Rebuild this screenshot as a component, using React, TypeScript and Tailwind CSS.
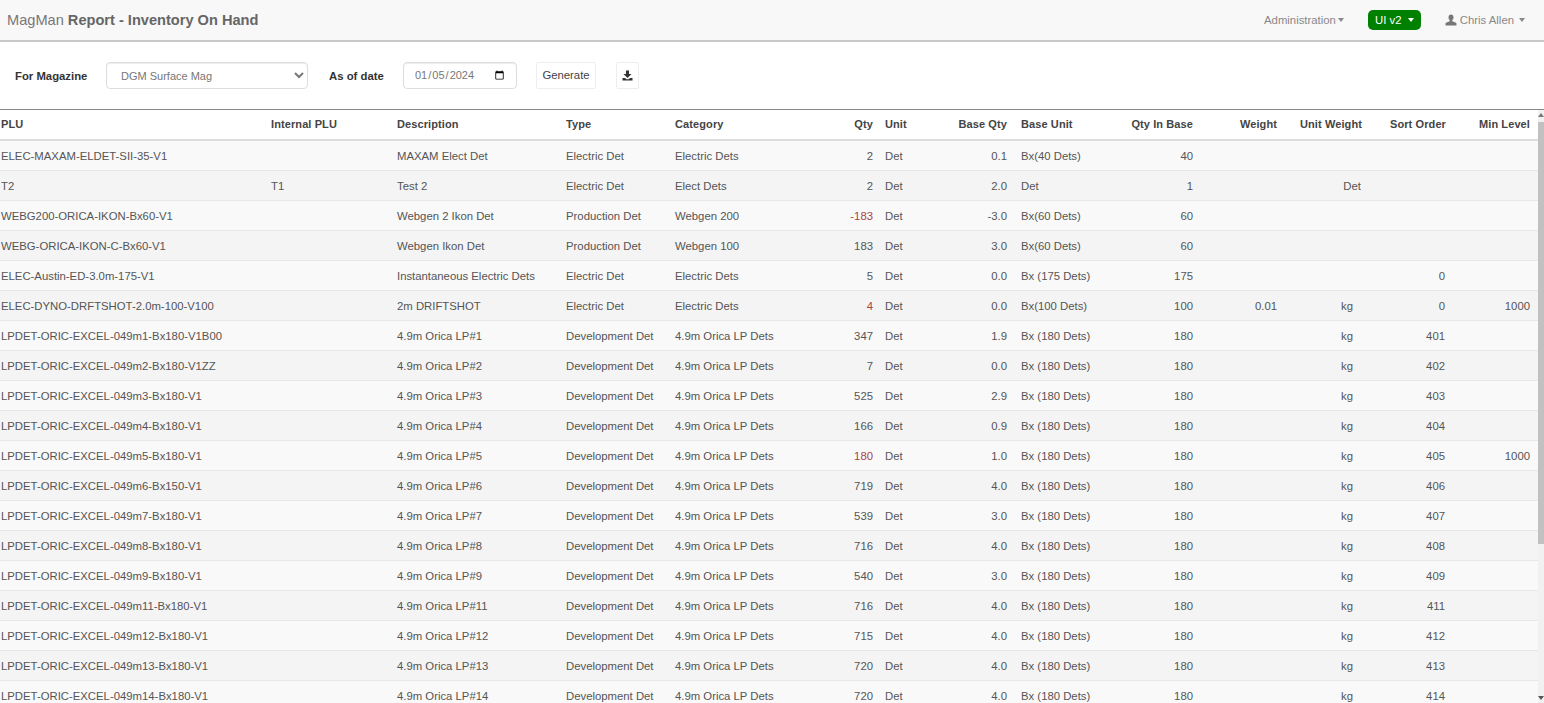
type Row = {
  plu: string;
  internal?: string;
  desc: string;
  type: string;
  cat: string;
  qty: string;
  red?: boolean;
  baseQty: string;
  baseUnit: string;
  inBase: string;
  weight?: string;
  unitWeight?: string;
  sort?: string;
  min?: string;
};

const lp = (plu: string, n: number, qty: string, baseQty: string, extra: Partial<Row> = {}): Row => ({
  plu,
  desc: `4.9m Orica LP#${n}`,
  type: "Development Det",
  cat: "4.9m Orica LP Dets",
  qty,
  baseQty,
  baseUnit: "Bx (180 Dets)",
  inBase: "180",
  unitWeight: "kg",
  sort: String(400 + n),
  ...extra,
});

const rows: Row[] = [
  { plu: "ELEC-MAXAM-ELDET-SII-35-V1", desc: "MAXAM Elect Det", type: "Electric Det", cat: "Electric Dets", qty: "2", baseQty: "0.1", baseUnit: "Bx(40 Dets)", inBase: "40" },
  { plu: "T2", internal: "T1", desc: "Test 2", type: "Electric Det", cat: "Elect Dets", qty: "2", baseQty: "2.0", baseUnit: "Det", inBase: "1", unitWeight: "Det" },
  { plu: "WEBG200-ORICA-IKON-Bx60-V1", desc: "Webgen 2 Ikon Det", type: "Production Det", cat: "Webgen 200", qty: "-183", red: true, baseQty: "-3.0", baseUnit: "Bx(60 Dets)", inBase: "60" },
  { plu: "WEBG-ORICA-IKON-C-Bx60-V1", desc: "Webgen Ikon Det", type: "Production Det", cat: "Webgen 100", qty: "183", baseQty: "3.0", baseUnit: "Bx(60 Dets)", inBase: "60" },
  { plu: "ELEC-Austin-ED-3.0m-175-V1", desc: "Instantaneous Electric Dets", type: "Electric Det", cat: "Electric Dets", qty: "5", baseQty: "0.0", baseUnit: "Bx (175 Dets)", inBase: "175", sort: "0" },
  { plu: "ELEC-DYNO-DRFTSHOT-2.0m-100-V100", desc: "2m DRIFTSHOT", type: "Electric Det", cat: "Electric Dets", qty: "4", red: true, baseQty: "0.0", baseUnit: "Bx(100 Dets)", inBase: "100", weight: "0.01", unitWeight: "kg", sort: "0", min: "1000" },
  lp("LPDET-ORIC-EXCEL-049m1-Bx180-V1B00", 1, "347", "1.9"),
  lp("LPDET-ORIC-EXCEL-049m2-Bx180-V1ZZ", 2, "7", "0.0"),
  lp("LPDET-ORIC-EXCEL-049m3-Bx180-V1", 3, "525", "2.9"),
  lp("LPDET-ORIC-EXCEL-049m4-Bx180-V1", 4, "166", "0.9"),
  lp("LPDET-ORIC-EXCEL-049m5-Bx180-V1", 5, "180", "1.0", { red: true, min: "1000" }),
  lp("LPDET-ORIC-EXCEL-049m6-Bx150-V1", 6, "719", "4.0"),
  lp("LPDET-ORIC-EXCEL-049m7-Bx180-V1", 7, "539", "3.0"),
  lp("LPDET-ORIC-EXCEL-049m8-Bx180-V1", 8, "716", "4.0"),
  lp("LPDET-ORIC-EXCEL-049m9-Bx180-V1", 9, "540", "3.0"),
  lp("LPDET-ORIC-EXCEL-049m11-Bx180-V1", 11, "716", "4.0"),
  lp("LPDET-ORIC-EXCEL-049m12-Bx180-V1", 12, "715", "4.0"),
  lp("LPDET-ORIC-EXCEL-049m13-Bx180-V1", 13, "720", "4.0"),
  lp("LPDET-ORIC-EXCEL-049m14-Bx180-V1", 14, "720", "4.0"),
];

const Caret = ({ className = "" }: { className?: string }) => (
  <span className={`inline-block w-0 h-0 border-x-[3.5px] border-x-transparent border-t-[4px] ${className}`} />
);

// glyphicon-user
const UserIcon = () => (
  <svg width="12" height="12" viewBox="0 0 12 12" fill="#777" className="mr-[3px]">
    <path d="M6 0.5c-1.6 0-2.5 1.2-2.5 2.8 0 1.2.5 2.3 1.2 2.9v1L1 8.7C.5 8.9.5 9.6.5 11.5h11c0-1.900 0-2.600-.5-2.800L7.300 7.200v-1c.7-.6 1.200-1.700 1.200-2.900C8.500 1.700 7.600.5 6 .5z" />
  </svg>
);

// glyphicon-save
const SaveIcon = () => (
  <svg width="11" height="11" viewBox="0 0 11 11" fill="#333">
    <path d="M4 0.500h3v3.500h2.500L5.500 8 1.500 4H4z" />
    <path d="M0.500 8h2.500l1.500 1.300h2L8 8h2.500v2.500h-10z" />
  </svg>
);

const App = () => {
  return (
    <div className="h-[703px] w-[1544px] overflow-hidden bg-white font-['Liberation_Sans',Arial,sans-serif] text-[11.33px] text-[#555]">
      <div className="h-[42px] bg-[#f8f8f8] border-b-2 border-[#c8c8c8] flex items-center pl-[7px] pr-[19px]">
        <div className="text-[14.6px] text-[#777] pt-[1px]">
          MagMan <span className="font-bold text-[#666]">Report - Inventory On Hand</span>
        </div>
        <div className="ml-auto flex items-center text-[#888]">
          <span className="flex items-center gap-[2px]">Administration<Caret className="border-t-[#888]" /></span>
          <span className="ml-[24px] h-[20px] w-[53px] bg-[#008000] rounded-[5px] text-white flex items-center justify-center gap-[6px]">UI v2<Caret className="border-t-white" /></span>
          <span className="ml-[24px] flex items-center"><UserIcon />Chris Allen<Caret className="ml-[5px] border-t-[#888]" /></span>
        </div>
      </div>

      <div className="h-[67px] flex items-center pl-[15px]">
        <label className="font-bold text-[#333] w-[91px] pt-[1px]">For Magazine</label>
        <select defaultValue="DGM" className="h-[27px] w-[202px] border border-[#ddd] rounded-[4px] pl-[10px] pr-[4px] text-[11px] text-[#777] bg-white shadow-[inset_0_1px_1px_rgba(0,0,0,0.075)]">
          <option value="DGM">DGM Surface Mag</option>
        </select>
        <label className="font-bold text-[#333] ml-[21px] w-[74px] pt-[1px]">As of date</label>
        <input type="date" defaultValue="2024-01-05" className="h-[27px] w-[114px] border border-[#ddd] rounded-[4px] pl-[10px] pr-[9px] text-[11px] text-[#777] shadow-[inset_0_1px_1px_rgba(0,0,0,0.075)]" />
        <button className="ml-[19px] h-[27px] w-[60px] border border-[#eee] text-[#444] rounded-[2px]">Generate</button>
        <button className="ml-[20px] h-[27px] w-[23px] border border-[#eee] rounded-[2px] flex items-center justify-center"><SaveIcon /></button>
      </div>

      <div className="flex h-[594px] border-t border-[#888]">
        <div className="w-[1538px] overflow-hidden">
          <table className="table-fixed w-[1538px] border-collapse">
            <colgroup>
              <col className="w-[271px]" />
              <col className="w-[126px]" />
              <col className="w-[169px]" />
              <col className="w-[109px]" />
              <col className="w-[110px]" />
              <col className="w-[90px]" />
              <col className="w-[46px]" />
              <col className="w-[88px]" />
              <col className="w-[100px]" />
              <col className="w-[84px]" />
              <col className="w-[84px]" />
              <col className="w-[85px]" />
              <col className="w-[84px]" />
              <col className="w-[92px]" />
            </colgroup>
            <thead>
              <tr className="h-[30px] text-[11px] tracking-[0.1px] text-[#444] border-b-2 border-[#ddd]">
                <th className="text-left pl-[1px] font-bold">PLU</th>
                <th className="text-left font-bold">Internal PLU</th>
                <th className="text-left font-bold">Description</th>
                <th className="text-left font-bold">Type</th>
                <th className="text-left font-bold">Category</th>
                <th className="text-right pr-[2px] font-bold">Qty</th>
                <th className="text-left pl-[10px] font-bold">Unit</th>
                <th className="text-right pr-[2px] font-bold">Base Qty</th>
                <th className="text-left pl-[12px] font-bold">Base Unit</th>
                <th className="text-right font-bold">Qty In Base</th>
                <th className="text-right font-bold">Weight</th>
                <th className="text-right font-bold">Unit Weight</th>
                <th className="text-right font-bold">Sort Order</th>
                <th className="text-right pr-[8px] font-bold">Min Level</th>
              </tr>
            </thead>
            <tbody>
              {rows.map((r, i) => (
                <tr key={r.plu} className={`h-[30.03px] border-b border-[#e8e8e8] ${i % 2 === 0 ? "bg-[#f9f9f9]" : "bg-[#f4f4f4]"}`}>
                  <td className="pl-[1px] pt-[2px]">{r.plu}</td>
                  <td className="pt-[2px]">{r.internal}</td>
                  <td className="pt-[2px]">{r.desc}</td>
                  <td className="pt-[2px]">{r.type}</td>
                  <td className="pt-[2px]">{r.cat}</td>
                  <td className={`text-right pr-[2px] pt-[2px] ${r.red ? "text-[#a94442]" : ""}`}>{r.qty}</td>
                  <td className="pl-[10px] pt-[2px]">Det</td>
                  <td className="text-right pr-[2px] pt-[2px]">{r.baseQty}</td>
                  <td className="pl-[12px] pt-[2px]">{r.baseUnit}</td>
                  <td className="text-right pt-[2px]">{r.inBase}</td>
                  <td className="text-right pt-[2px]">{r.weight}</td>
                  <td className={`text-right pt-[2px] ${r.unitWeight === "kg" ? "pr-[9px]" : "pr-[1px]"}`}>{r.unitWeight}</td>
                  <td className="text-right pr-[1px] pt-[2px]">{r.sort}</td>
                  <td className="text-right pr-[8px] pt-[2px]">{r.min}</td>
                </tr>
              ))}
            </tbody>
          </table>
        </div>
        <div className="w-[6px] bg-[#f1f1f1] flex flex-col items-center">
          <Caret className="mt-[3px] rotate-180 border-t-[#777]" />
          <div className="mt-[5px] w-full h-[422px] bg-[#c1c1c1]" />
          <Caret className="mt-auto mb-[3px] border-t-[#555]" />
        </div>
      </div>
    </div>
  );
};

export default App;
